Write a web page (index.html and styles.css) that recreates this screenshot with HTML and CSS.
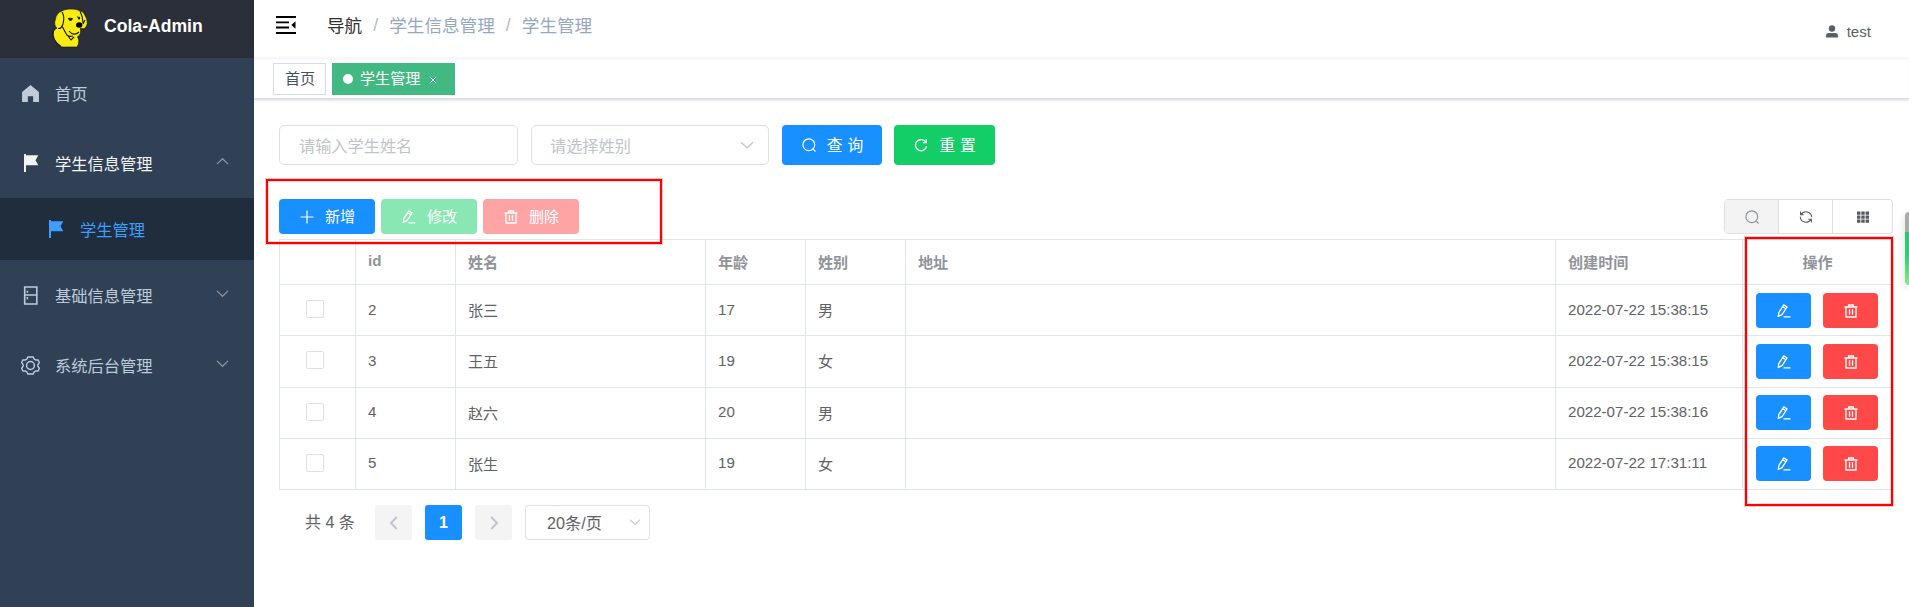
FILE: index.html
```html
<!DOCTYPE html>
<html lang="zh-CN">
<head>
<meta charset="utf-8">
<title>Cola-Admin</title>
<link rel="stylesheet" href="styles.css">
</head>
<body>
<svg class="sprite" aria-hidden="true">
  <symbol id="edit" viewBox="0 0 14 14"><path d="M1.300 12.300l.500-3.700L6.800 1l3.200 2L5 10.700zM5.700 2.700l3.200 2M6.500 12.900H13.500" fill="none" stroke="currentColor" stroke-width="1.300"/></symbol>
  <symbol id="trash" viewBox="0 0 14 14"><path d="M.5 3h13M4.600 3V1h4.800v2M2 3v10h10V3M5.500 5.300v5.400M8.500 5.300v5.400" fill="none" stroke="currentColor" stroke-width="1.300"/></symbol>
  <symbol id="search" viewBox="0 0 14 14"><circle cx="6.800" cy="6.700" r="5.900" fill="none" stroke="currentColor" stroke-width="1.200"/><path d="M10.900 10.900l2.600 2.600" stroke="currentColor" stroke-width="1.200"/></symbol>
  <symbol id="down" viewBox="0 0 14 14"><path d="M1 4.200L7 10l6-5.800" fill="none" stroke="currentColor" stroke-width="var(--w, 1.200)"/></symbol>
  <symbol id="flag" viewBox="0 0 16 18"><path d="M1 0h2v1.200h12.300l-2.800 5 2.800 5H3V18H1z" fill="currentColor"/></symbol>
</svg>
<div class="app">
  <aside class="sidebar">
    <div class="brand">
      <svg class="dog" viewBox="0 0 38 40"><path d="M11 3C15 .500 24 .500 28 2.500c3 .500 5 2 6.500 6C36 11 37 15 35.500 18c-1 2-3 3-4 2.500L29.500 20c0 3 .500 5-1 7-.500 1-2 1.500-2 2 2 3 1.500 7-.500 10H11C5 36 1 31 2 25c.500-2 2-4 4-5C3 18 3.500 14 4.500 11c.500-4 3-7 6.500-8z" fill="#f7ec13" stroke="#111" stroke-width=".6"/><path d="M11 4c3 4 2 8 1 12-1 3-2 5-5 4.500M29 3c2 4 3 8 3 12M32 16l2-4M17 11c2-1.500 3-1 5 0M26 9l3 .500M11 18c2 4 3 6 5 9 2 2 4 1.500 6 1M18 23c3 4 7 4 10 1M2.500 23c-2 6 2 12 7 15M17 28l3 4 3-3" fill="none" stroke="#161616" stroke-width="1.100"/><ellipse cx="28.200" cy="17" rx="3.200" ry="2.800"/><ellipse cx="19.500" cy="11.800" rx="1.800" ry=".9"/><circle cx="28" cy="10.500" r="1"/></svg>
      <b>Cola-Admin</b>
    </div>
    <nav>
      <div class="item"><svg class="mi" viewBox="0 0 18 18"><path d="M9 1l8 6.500V17h-5.500v-5.500h-5V17H1V7.500z" fill="currentColor"/></svg><span>首页</span></div>
      <div class="item open"><svg class="mi flag"><use href="#flag"/></svg><span>学生信息管理</span><svg class="arrow up"><use href="#down"/></svg></div>
      <div class="item sub"><svg class="mi flag"><use href="#flag"/></svg><span>学生管理</span></div>
      <div class="item"><svg class="mi" viewBox="0 0 18 18"><path d="M3.500 1h11.500v16H3.500zM3.500 8.500H15M6 4.500v2M6 10.500v2" fill="none" stroke="currentColor" stroke-width="1.500"/></svg><span>基础信息管理</span><svg class="arrow"><use href="#down"/></svg></div>
      <div class="item"><svg class="mi" viewBox="0 0 18 18"><path d="M6.500 1h5l1 2 1.500.800 2.200-.100 1.200 2.500L16 8.300v1.400l1.400 2-1.200 2.600-2.200-.100-1.500.800-1 2h-5l-1-2-1.500-.800-2.200.100-1.200-2.600 1.400-2V8.300L.600 6.200l1.200-2.500 2.200.100L5.500 3z" fill="none" stroke="currentColor" stroke-width="1.300"/><circle cx="9" cy="9" r="3.700" fill="none" stroke="currentColor" stroke-width="1.400"/></svg><span>系统后台管理</span><svg class="arrow"><use href="#down"/></svg></div>
    </nav>
  </aside>
  <main>
    <header class="navbar">
      <svg class="burger" viewBox="0 0 20 18"><path d="M0 1h20M0 6.300h13M0 11.500h13M0 17h20" stroke="#000" stroke-width="1.800"/><path d="M15.300 9l4.200-3.700v7.400z"/></svg>
      <div class="crumbs"><span class="root">导航</span><i>/</i><span>学生信息管理</span><i>/</i><span>学生管理</span></div>
      <div class="user"><svg viewBox="0 0 12 13"><circle cx="6" cy="3.500" r="3.200" fill="currentColor"/><path d="M0 12.500v-1.800Q0 8 3 8h6q3 0 3 2.700v1.800z" fill="currentColor"/></svg><span>test</span></div>
    </header>
    <div class="tags"><span class="tag">首页</span><span class="tag active"><i class="dot"></i>学生管理<svg class="x" viewBox="0 0 6 6"><path d="M.500.500l5 5M5.500.500l-5 5" stroke="currentColor" stroke-width="1"/></svg></span></div>
    <section class="content">
      <div class="form">
        <div class="field">请输入学生姓名</div>
        <div class="field select">请选择姓别<svg><use href="#down"/></svg></div>
        <button class="btn large blue query"><svg><use href="#search"/></svg><span>查 询</span></button>
        <button class="btn large green"><svg viewBox="0 0 14 14"><path d="M12 4.500A5.600 5.600 0 1 0 12.600 8M12.300 1.300v3.400H9" fill="none" stroke="currentColor" stroke-width="1.300"/></svg><span>重 置</span></button>
      </div>
      <div class="toolbar">
        <button class="btn blue"><svg viewBox="0 0 14 14"><path d="M7 .500v13M.500 7h13" stroke="currentColor" stroke-width="1.200"/></svg><span>新增</span></button>
        <button class="btn green off"><svg><use href="#edit"/></svg><span>修改</span></button>
        <button class="btn red off"><svg><use href="#trash"/></svg><span>删除</span></button>
        <div class="group">
          <span class="on"><svg><use href="#search"/></svg></span>
          <span><svg viewBox="0 0 14 14"><path d="M1.600 1.500v3.300h3M2.100 4.600A5.700 5.700 0 0 1 12.700 7.300M12.400 12.500V9.200h-3M11.900 9.400A5.700 5.700 0 0 1 1.300 6.700" fill="none" stroke="currentColor" stroke-width="1.100"/></svg></span>
          <span><svg viewBox="0 0 14 14"><path d="M1 3.200h12M1 7.200h12M1 11.200h12" stroke="currentColor" stroke-width="3.200" stroke-dasharray="3.400 .9"/></svg></span>
        </div>
        <div class="mark mark-tools"></div>
      </div>
      <div class="tablebox">
        <table>
          <colgroup><col class="c1"><col class="c2"><col class="c3"><col class="c2"><col class="c2"><col class="c4"><col class="c5"><col class="c6"></colgroup>
          <thead><tr><th></th><th>id</th><th>姓名</th><th>年龄</th><th>姓别</th><th>地址</th><th>创建时间</th><th class="ops">操作</th></tr></thead>
          <tbody>
            <tr><td><i class="check"></i></td><td>2</td><td>张三</td><td>17</td><td>男</td><td></td><td>2022-07-22 15:38:15</td><td><div class="acts"><button class="btn blue"><svg><use href="#edit"/></svg></button><button class="btn red"><svg><use href="#trash"/></svg></button></div></td></tr>
            <tr><td><i class="check"></i></td><td>3</td><td>王五</td><td>19</td><td>女</td><td></td><td>2022-07-22 15:38:15</td><td><div class="acts"><button class="btn blue"><svg><use href="#edit"/></svg></button><button class="btn red"><svg><use href="#trash"/></svg></button></div></td></tr>
            <tr><td><i class="check"></i></td><td>4</td><td>赵六</td><td>20</td><td>男</td><td></td><td>2022-07-22 15:38:16</td><td><div class="acts"><button class="btn blue"><svg><use href="#edit"/></svg></button><button class="btn red"><svg><use href="#trash"/></svg></button></div></td></tr>
            <tr><td><i class="check"></i></td><td>5</td><td>张生</td><td>19</td><td>女</td><td></td><td>2022-07-22 17:31:11</td><td><div class="acts"><button class="btn blue"><svg><use href="#edit"/></svg></button><button class="btn red"><svg><use href="#trash"/></svg></button></div></td></tr>
          </tbody>
        </table>
        <div class="mark mark-ops"></div>
      </div>
      <div class="pager">
        <span class="total">共 4 条</span>
        <span class="pg"><svg class="prev"><use href="#down"/></svg></span>
        <span class="pg cur">1</span>
        <span class="pg"><svg class="next"><use href="#down"/></svg></span>
        <span class="size">20条/页<svg><use href="#down"/></svg></span>
      </div>
    </section>
  </main>
  <div class="float"></div>
</div>
</body>
</html>
```
FILE: styles.css
```css
* { box-sizing: border-box; }
body { margin: 0; background: #fff; color: #606266; font: 15.1px "Liberation Sans", "Noto Sans CJK SC", sans-serif; overflow: hidden; }
i { font-style: normal; }
.sprite { position: absolute; width: 0; height: 0; }
.app { display: flex; height: 607px; position: relative; }

.sidebar { width: 254px; background: #304156; flex: none; }
.brand { height: 58px; background: #2b2f3a; display: flex; align-items: center; padding: 0 0 6px 51px; color: #fff; font-size: 17.6px; }
.dog { width: 38px; height: 40px; margin: 3px 15px 0 0; }
.item { height: 70px; display: flex; align-items: center; padding: 0 25px 0 21px; color: #bfcbd9; font-size: 16.250px; }
.item span { margin: -1px 0 0 15px; flex: 1; }
.mi { width: 19px; height: 19px; flex: none; }
.open { color: #f4f4f5; }
.sub { height: 62px; padding-left: 46px; background: #1f2d3d; color: #409eff; }
.flag { height: 18px; padding-left: 1px; }
.arrow { width: 13px; height: 13px; color: #909399; margin-top: -4px; --w: 1.300; }
.up { transform: rotate(180deg); }

main { flex: 1; min-width: 0; }
.navbar { height: 58px; display: flex; align-items: center; padding: 0 38px 8px 22px; box-shadow: 0 1px 4px rgba(0, 21, 41, .1); }
.burger { width: 20px; height: 18px; margin-top: -1px; }
.crumbs { display: flex; align-items: center; margin: -2px 0 0 31px; font-size: 17.600px; color: #97a8be; }
.crumbs i { width: 27px; text-align: center; color: #b2bac6; margin-top: 2px; }
.crumbs .root { color: #303133; }
.user { margin-left: auto; display: flex; align-items: center; gap: 9px; color: #5a5e66; padding-top: 13px; }
.user svg { width: 12px; height: 13px; }
.tags { height: 41px; display: flex; gap: 6px; padding: 5px 19px; background: #fff; border-bottom: 1px solid #d8dce5; box-shadow: 0 1px 3px rgba(0, 0, 0, .18), inset 0 2px 3px -1px rgba(0, 21, 41, .06); }
.tag { width: 53px; height: 32px; border: 1px solid #d8dce5; padding: 0 10px 0 11px; display: flex; align-items: center; color: #495060; line-height: 30px; white-space: nowrap; }
.active { background: #42b983; border-color: #42b983; color: #fff; width: 123px; padding: 0 10px; }
.dot { width: 10px; height: 10px; border-radius: 50%; background: #fff; margin-right: 7px; }
.x { width: 6px; height: 6px; margin: 2px 0 0 10px; }

.content { padding: 26px 16px 0 25px; }
.form { display: flex; height: 40px; }
.field { width: 239px; margin-right: 13px; border: 1px solid #dcdfe6; border-radius: 5px; padding: 0 14px 1px 19px; display: flex; align-items: center; justify-content: space-between; color: #bfc3cb; font-size: 16.200px; }
.select { width: 238px; padding-left: 18px; }
.field svg { width: 14px; height: 14px; }
.btn { border: 0; border-radius: 4px; height: 35px; width: 96px; display: flex; align-items: center; justify-content: center; gap: 10px; padding: 0; color: #fff; font: inherit; }
.btn svg { width: 14px; height: 14px; }
.btn span { margin: -3px -1px 0 1px; }
.large { width: 101px; height: 40px; font-size: 15.8px; }
.large span { margin: -1px -1px 0 1px; word-spacing: .5px; }
.query { width: 100px; margin: 0 12px 0 0; }
.blue { background: #1890ff; }
.green { background: #13ce66; }
.red { background: #ff4949; }
.green.off { background: #89e7b3; }
.red.off { background: #ffa4a4; }
.toolbar { display: flex; gap: 6px; margin-top: 34px; position: relative; height: 40px; }
.group { margin-left: auto; display: flex; width: 169px; height: 35px; border: 1px solid #dcdfe6; border-radius: 4px; }
.group span { width: 54px; display: flex; align-items: center; justify-content: center; border-left: 1px solid #dcdfe6; color: #55585e; }
.group span:first-child { border: 0; width: 53px; }
.group span:last-child { flex: 1; }
.group .on { background: #f3f3f3; color: #909399; }
.group svg { width: 14px; height: 14px; }
.mark { position: absolute; border: 2px solid #f00; box-shadow: 0 0 0 1px rgba(255, 0, 0, .22), inset 0 0 0 1px rgba(255, 0, 0, .15); pointer-events: none; }
.mark-tools { left: -13px; top: -20px; width: 396px; height: 65px; z-index: 2; }
.mark-ops { left: 1466px; top: -2px; width: 148px; height: 269px; }

.tablebox { position: relative; }
table { border-collapse: separate; border-spacing: 0; table-layout: fixed; width: 1614px; border-top: 1px solid #dfe6ec; border-left: 1px solid #dfe6ec; }
.c1 { width: 76px; }
.c2 { width: 100px; }
.c3 { width: 250px; }
.c4 { width: 650px; }
.c5 { width: 187px; }
.c6 { width: 150px; }
th, td { border-right: 1px solid #dfe6ec; border-bottom: 1px solid #dfe6ec; text-align: left; white-space: nowrap; }
th { height: 45px; padding: 0 12px 3px; color: #909399; }
td { height: 51.250px; padding: 0 12px 2px; }
th.ops { text-align: center; }
td:last-child { padding: 0 0 0 13px; }
.check { display: block; width: 18px; height: 18px; border: 1px solid #dcdfe6; border-radius: 2px; margin-left: 14px; margin-top: 0; }
.acts { display: flex; gap: 12px; }
.acts .btn { width: 55px; }
.acts svg { margin-top: 1px; }

.pager { display: flex; align-items: center; height: 35px; margin: 15px 0 0 26px; }
.total { width: 70px; font-size: 16px; padding-bottom: 4px; }
.pg { width: 37px; height: 35px; margin-right: 13px; border-radius: 3px; background: #f4f4f5; color: #c0c4cc; display: flex; align-items: center; justify-content: center; }
.pg svg { width: 14px; height: 14px; --w: 2; }
.cur { background: #1890ff; color: #fff; font-weight: 700; font-size: 16px; }
.prev { transform: rotate(90deg); }
.next { transform: rotate(-90deg); }
.size { width: 125px; height: 35px; border: 1px solid #dcdfe6; border-radius: 4px; display: flex; align-items: center; justify-content: space-between; padding: 0 8px 1px 21px; font-size: 16.2px; }
.size svg { width: 12px; height: 12px; color: #c0c4cc; }
.float { position: absolute; right: 0; top: 212px; width: 4px; height: 73px; border-radius: 5px 0 0 5px; background: linear-gradient(#aaa 20px, #20ce6c 20px, #29d36c 60%, #80ee80); box-shadow: 0 2px 8px rgba(0, 0, 0, .2); }
```
